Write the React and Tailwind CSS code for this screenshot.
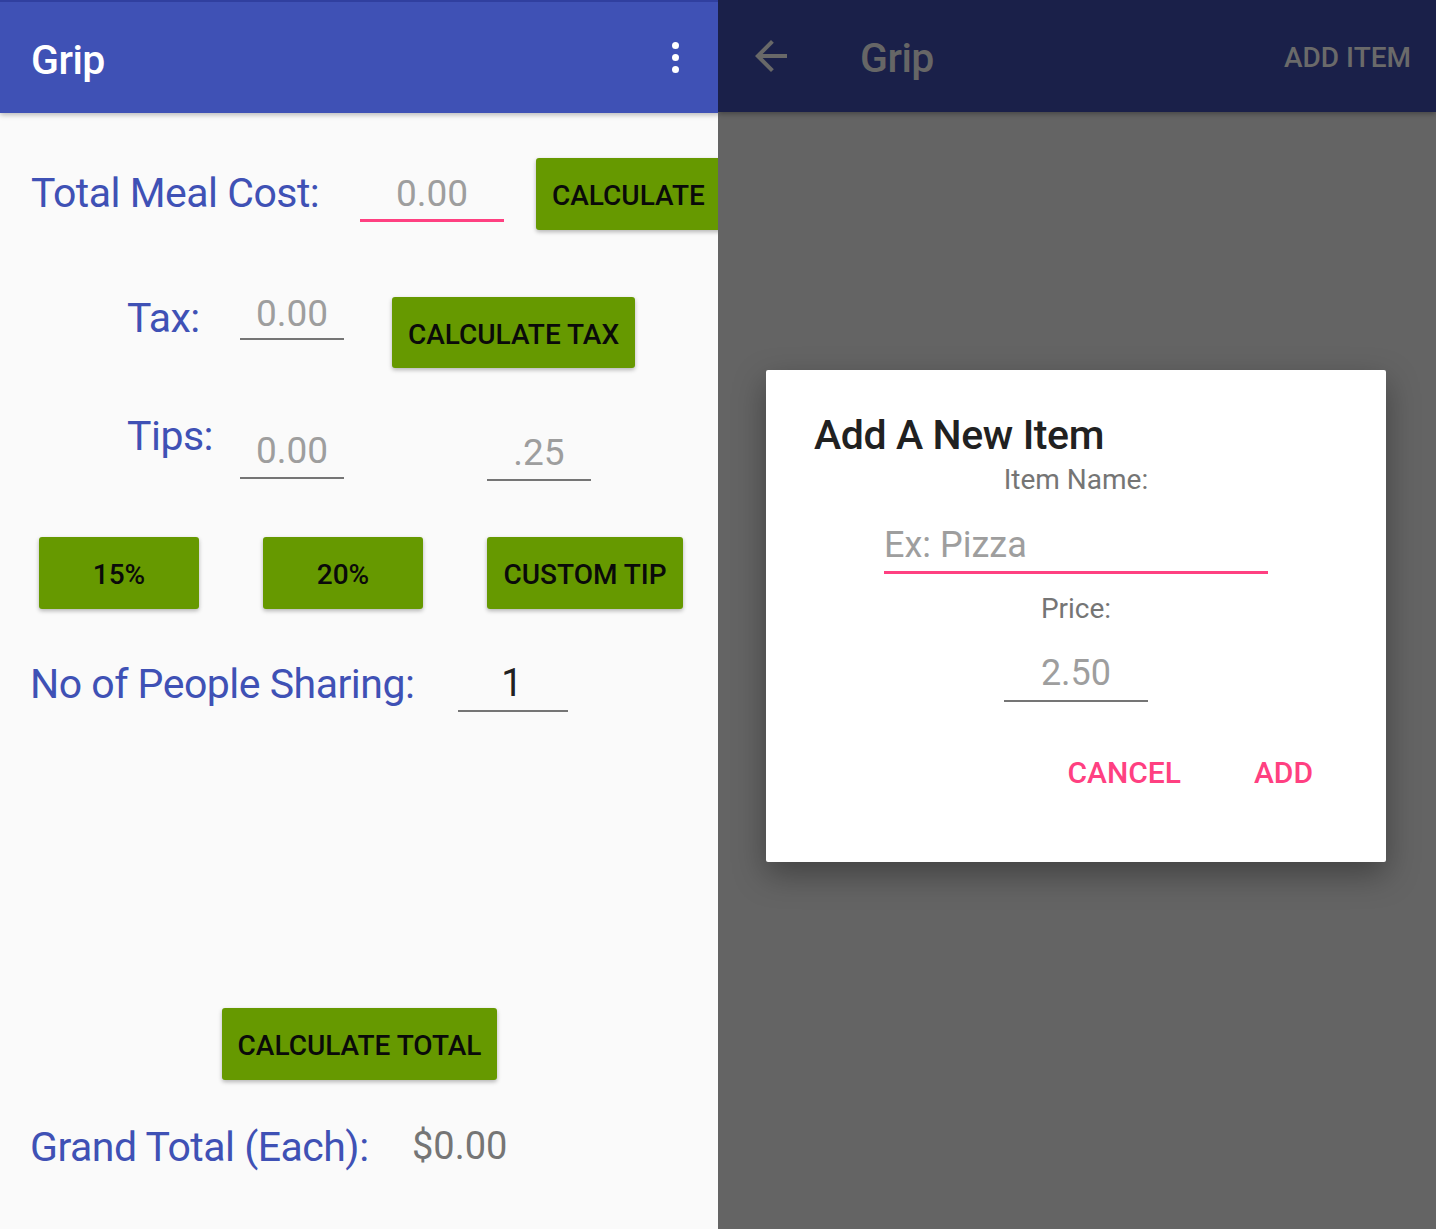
function Underlined({ className = "", text, textClass = "", lineClass = "" }) {
  return (
    <div className={`flex shrink-0 flex-col ${className}`}>
      <span className={`leading-none ${textClass}`}>{text}</span>
      <div className={lineClass} />
    </div>
  );
}

function GreenButton({ className = "", children }) {
  return (
    <button
      type="button"
      className={`flex shrink-0 items-center rounded-[3px] bg-[#669900] pt-[4px] text-[28px] font-medium leading-none text-[#0a0a0a] shadow-[0_2px_4px_rgba(0,0,0,0.28)] ${className}`}
    >
      {children}
    </button>
  );
}

function CalculatorPanel() {
  return (
    <div className="flex h-full w-[718px] shrink-0 flex-col overflow-hidden bg-[#FAFAFA]">
      <header className="relative z-10 flex h-[113px] shrink-0 items-start border-t-2 border-[#303F9F] bg-[#3F51B5] shadow-[0_2px_5px_rgba(0,0,0,0.26)]">
        <h1 className="ml-[31px] mt-[38px] text-[41px] font-medium leading-none tracking-[-0.5px] text-white">Grip</h1>
        <div className="ml-auto mr-[39px] mt-[40px] flex flex-col gap-[5px]">
          <span className="block h-[7px] w-[7px] rounded-full bg-white" />
          <span className="block h-[7px] w-[7px] rounded-full bg-white" />
          <span className="block h-[7px] w-[7px] rounded-full bg-white" />
        </div>
      </header>

      <div className="mt-[45px] flex items-start">
        <span className="ml-[31px] mt-[15px] w-[329px] shrink-0 text-[41px] leading-none tracking-[-0.5px] text-[#3F51B5]">
          Total Meal Cost:
        </span>
        <Underlined
          className="mt-[17px] w-[144px]"
          text="0.00"
          textClass="text-center text-[37px] text-[#9E9E9E]"
          lineClass="mt-[7px] h-[3px] bg-[#FF4081]"
        />
        <GreenButton className="ml-[32px] h-[72px] w-[200px] justify-start pl-[16px]">CALCULATE</GreenButton>
      </div>

      <div className="mt-[65px] flex items-start">
        <span className="ml-[127px] mt-[3px] w-[113px] shrink-0 text-[41px] leading-none tracking-[-0.5px] text-[#3F51B5]">
          Tax:
        </span>
        <Underlined
          className="w-[104px]"
          text="0.00"
          textClass="text-center text-[37px] text-[#9E9E9E]"
          lineClass="mt-[6px] h-[2px] bg-[#757575]"
        />
        <GreenButton className="ml-[48px] mt-[2px] h-[71px] w-[243px] justify-center">CALCULATE TAX</GreenButton>
      </div>

      <div className="mt-[48px] flex items-start">
        <span className="ml-[127px] w-[113px] shrink-0 text-[41px] leading-none tracking-[-0.5px] text-[#3F51B5]">
          Tips:
        </span>
        <Underlined
          className="mt-[16px] w-[104px]"
          text="0.00"
          textClass="text-center text-[37px] text-[#9E9E9E]"
          lineClass="mt-[8px] h-[2px] bg-[#757575]"
        />
        <Underlined
          className="ml-[143px] mt-[18px] w-[104px]"
          text=".25"
          textClass="text-center text-[37px] text-[#9E9E9E]"
          lineClass="mt-[8px] h-[2px] bg-[#757575]"
        />
      </div>

      <div className="mt-[56px] flex items-start">
        <GreenButton className="ml-[39px] h-[72px] w-[160px] justify-center">15%</GreenButton>
        <GreenButton className="ml-[64px] h-[72px] w-[160px] justify-center">20%</GreenButton>
        <GreenButton className="ml-[64px] h-[72px] w-[196px] justify-center">CUSTOM TIP</GreenButton>
      </div>

      <div className="mt-[55px] flex items-start">
        <span className="ml-[30px] w-[428px] shrink-0 text-[41px] leading-none tracking-[-0.5px] text-[#3F51B5]">
          No of People Sharing:
        </span>
        <Underlined
          className="w-[110px]"
          text="1"
          textClass="pr-[2px] text-center text-[38px] text-[#212121]"
          lineClass="mt-[8px] h-[2px] bg-[#757575]"
        />
      </div>

      <div className="mt-[296px] flex">
        <GreenButton className="ml-[222px] h-[72px] w-[275px] justify-center">CALCULATE TOTAL</GreenButton>
      </div>

      <div className="mt-[47px] flex items-start">
        <span className="ml-[30px] w-[382px] shrink-0 text-[41px] leading-none tracking-[-0.5px] text-[#3F51B5]">
          Grand Total (Each):
        </span>
        <span className="text-[38px] leading-none text-[#757575]">$0.00</span>
      </div>
    </div>
  );
}

function AddItemPanel() {
  return (
    <div className="flex h-full w-[718px] shrink-0 flex-col bg-[#646464]">
      <header className="flex h-[112px] shrink-0 items-start bg-[#1A2049] shadow-[0_2px_5px_rgba(0,0,0,0.3)]">
        <svg className="ml-[29px] mt-[32px] h-[48px] w-[48px] shrink-0" viewBox="0 0 24 24" fill="#686868">
          <path d="M20 11H7.83l5.59-5.59L12 4l-8 8 8 8 1.41-1.41L7.83 13H20v-2z" />
        </svg>
        <span className="ml-[65px] mt-[38px] text-[41px] font-medium leading-none tracking-[-0.5px] text-[#666666]">
          Grip
        </span>
        <span className="ml-auto mr-[25px] mt-[44px] text-[28px] font-medium leading-none text-[#6a6a6a]">
          ADD ITEM
        </span>
      </header>

      <div className="flex flex-1 items-start pl-[48px] pt-[258px]">
        <div className="flex h-[492px] w-[620px] flex-col rounded-[2px] bg-white shadow-[0_12px_32px_rgba(0,0,0,0.35)]">
          <h2 className="ml-[48px] mt-[45px] text-[41px] font-medium leading-none tracking-[-0.4px] text-[#212121]">
            Add A New Item
          </h2>
          <p className="mt-[10px] text-center text-[28px] leading-none text-[#757575]">Item Name:</p>
          <Underlined
            className="ml-[118px] mt-[33px] w-[384px]"
            text="Ex: Pizza"
            textClass="text-[36px] text-[#9E9E9E]"
            lineClass="mt-[8px] h-[3px] bg-[#FF4081]"
          />
          <p className="mt-[21px] text-center text-[28px] leading-none text-[#757575]">Price:</p>
          <Underlined
            className="mx-auto mt-[32px] w-[144px]"
            text="2.50"
            textClass="text-center text-[36px] text-[#9E9E9E]"
            lineClass="mt-[9px] h-[2px] bg-[#757575]"
          />
          <div className="mt-[56px] flex justify-end gap-[73px] pr-[73px]">
            <button type="button" className="text-[30px] font-medium leading-none text-[#FF4081]">
              CANCEL
            </button>
            <button type="button" className="text-[30px] font-medium leading-none text-[#FF4081]">
              ADD
            </button>
          </div>
        </div>
      </div>
    </div>
  );
}

export default function App() {
  return (
    <div className="flex h-[1229px] w-[1436px] overflow-hidden font-['Roboto',sans-serif]">
      <CalculatorPanel />
      <AddItemPanel />
    </div>
  );
}
